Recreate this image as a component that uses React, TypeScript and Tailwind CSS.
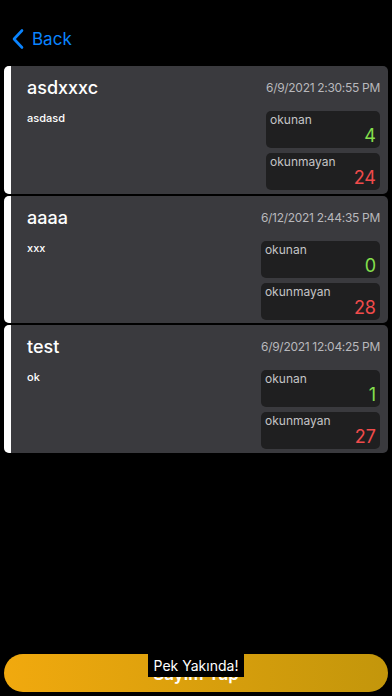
import React from "react";

type Item = { title: string; sub: string; date: string; read: number; unread: number };

const items: Item[] = [
  { title: "asdxxxc", sub: "asdasd", date: "6/9/2021 2:30:55 PM", read: 4, unread: 24 },
  { title: "aaaa", sub: "xxx", date: "6/12/2021 2:44:35 PM", read: 0, unread: 28 },
  { title: "test", sub: "ok", date: "6/9/2021 12:04:25 PM", read: 1, unread: 27 },
];

function Card({ it }: { it: Item }) {
  return (
    <div className="h-[127.5px] flex rounded-[5px] overflow-hidden bg-[#3a3a3e]">
      <div className="w-[7px] bg-white shrink-0" />
      <div className="flex-1 flex justify-between pl-[16px] pr-[8px] pt-[11px]">
        <div className="flex flex-col">
          <div className="text-[18px] leading-[22px] font-medium text-white">{it.title}</div>
          <div className="mt-[13px] text-[11px] leading-[13px] font-medium text-white">{it.sub}</div>
        </div>
        <div className="flex flex-col items-stretch">
          <div className="text-[12px] tracking-[-0.3px] leading-[22px] text-[#b8b8bc] text-right">{it.date}</div>
          <div className="mt-[12px] flex flex-col gap-[5px]">
            <div className="h-[37px] rounded-[5px] bg-[#1f1f20] px-[4px] pt-[2px] flex flex-col">
              <div className="text-[12px] leading-[14px] text-[#c4c4c6]">okunan</div>
              <div className="text-[18px] leading-[20px] text-[#86e04d] text-right -mt-[1px]">{it.read}</div>
            </div>
            <div className="h-[37px] rounded-[5px] bg-[#1f1f20] px-[4px] pt-[2px] flex flex-col">
              <div className="text-[12px] leading-[14px] text-[#c4c4c6]">okunmayan</div>
              <div className="text-[18px] leading-[20px] text-[#f04b4b] text-right -mt-[1px]">{it.unread}</div>
            </div>
          </div>
        </div>
      </div>
    </div>
  );
}

export default function App() {
  return (
    <div
      className="w-[392px] h-[696px] bg-black flex flex-col overflow-hidden"
      style={{ fontFamily: "Inter, 'Noto Sans', sans-serif" }}
    >
      <div className="h-[66px] flex items-start pt-[28px] pl-[11px]">
        <div className="flex items-center gap-[7px] text-[#0a84ff]">
          <svg width="14" height="22" viewBox="0 0 14 22" fill="none">
            <path d="M11 2.5 L3 11 L11 19.5" stroke="#0a84ff" strokeWidth="2.6" strokeLinecap="round" strokeLinejoin="round" />
          </svg>
          <span className="text-[17px] leading-[22px]">Back</span>
        </div>
      </div>
      <div className="flex flex-col gap-[2px] px-[4px]">
        {items.map((it) => (
          <Card key={it.title} it={it} />
        ))}
      </div>
      <div className="mt-auto mb-[4px] mx-[4px] relative">
        <div className="h-[38px] rounded-full bg-gradient-to-r from-[#f1a90e] to-[#c3960b] flex items-center justify-center pt-[4px]">
          <span className="text-[17px] font-semibold text-white">Sayım Yap</span>
        </div>
        <div className="absolute left-[144px] top-0 w-[96px] h-[23px] bg-black flex items-center justify-center">
          <span className="text-[14px] text-white">Pek Yakında!</span>
        </div>
      </div>
    </div>
  );
}
